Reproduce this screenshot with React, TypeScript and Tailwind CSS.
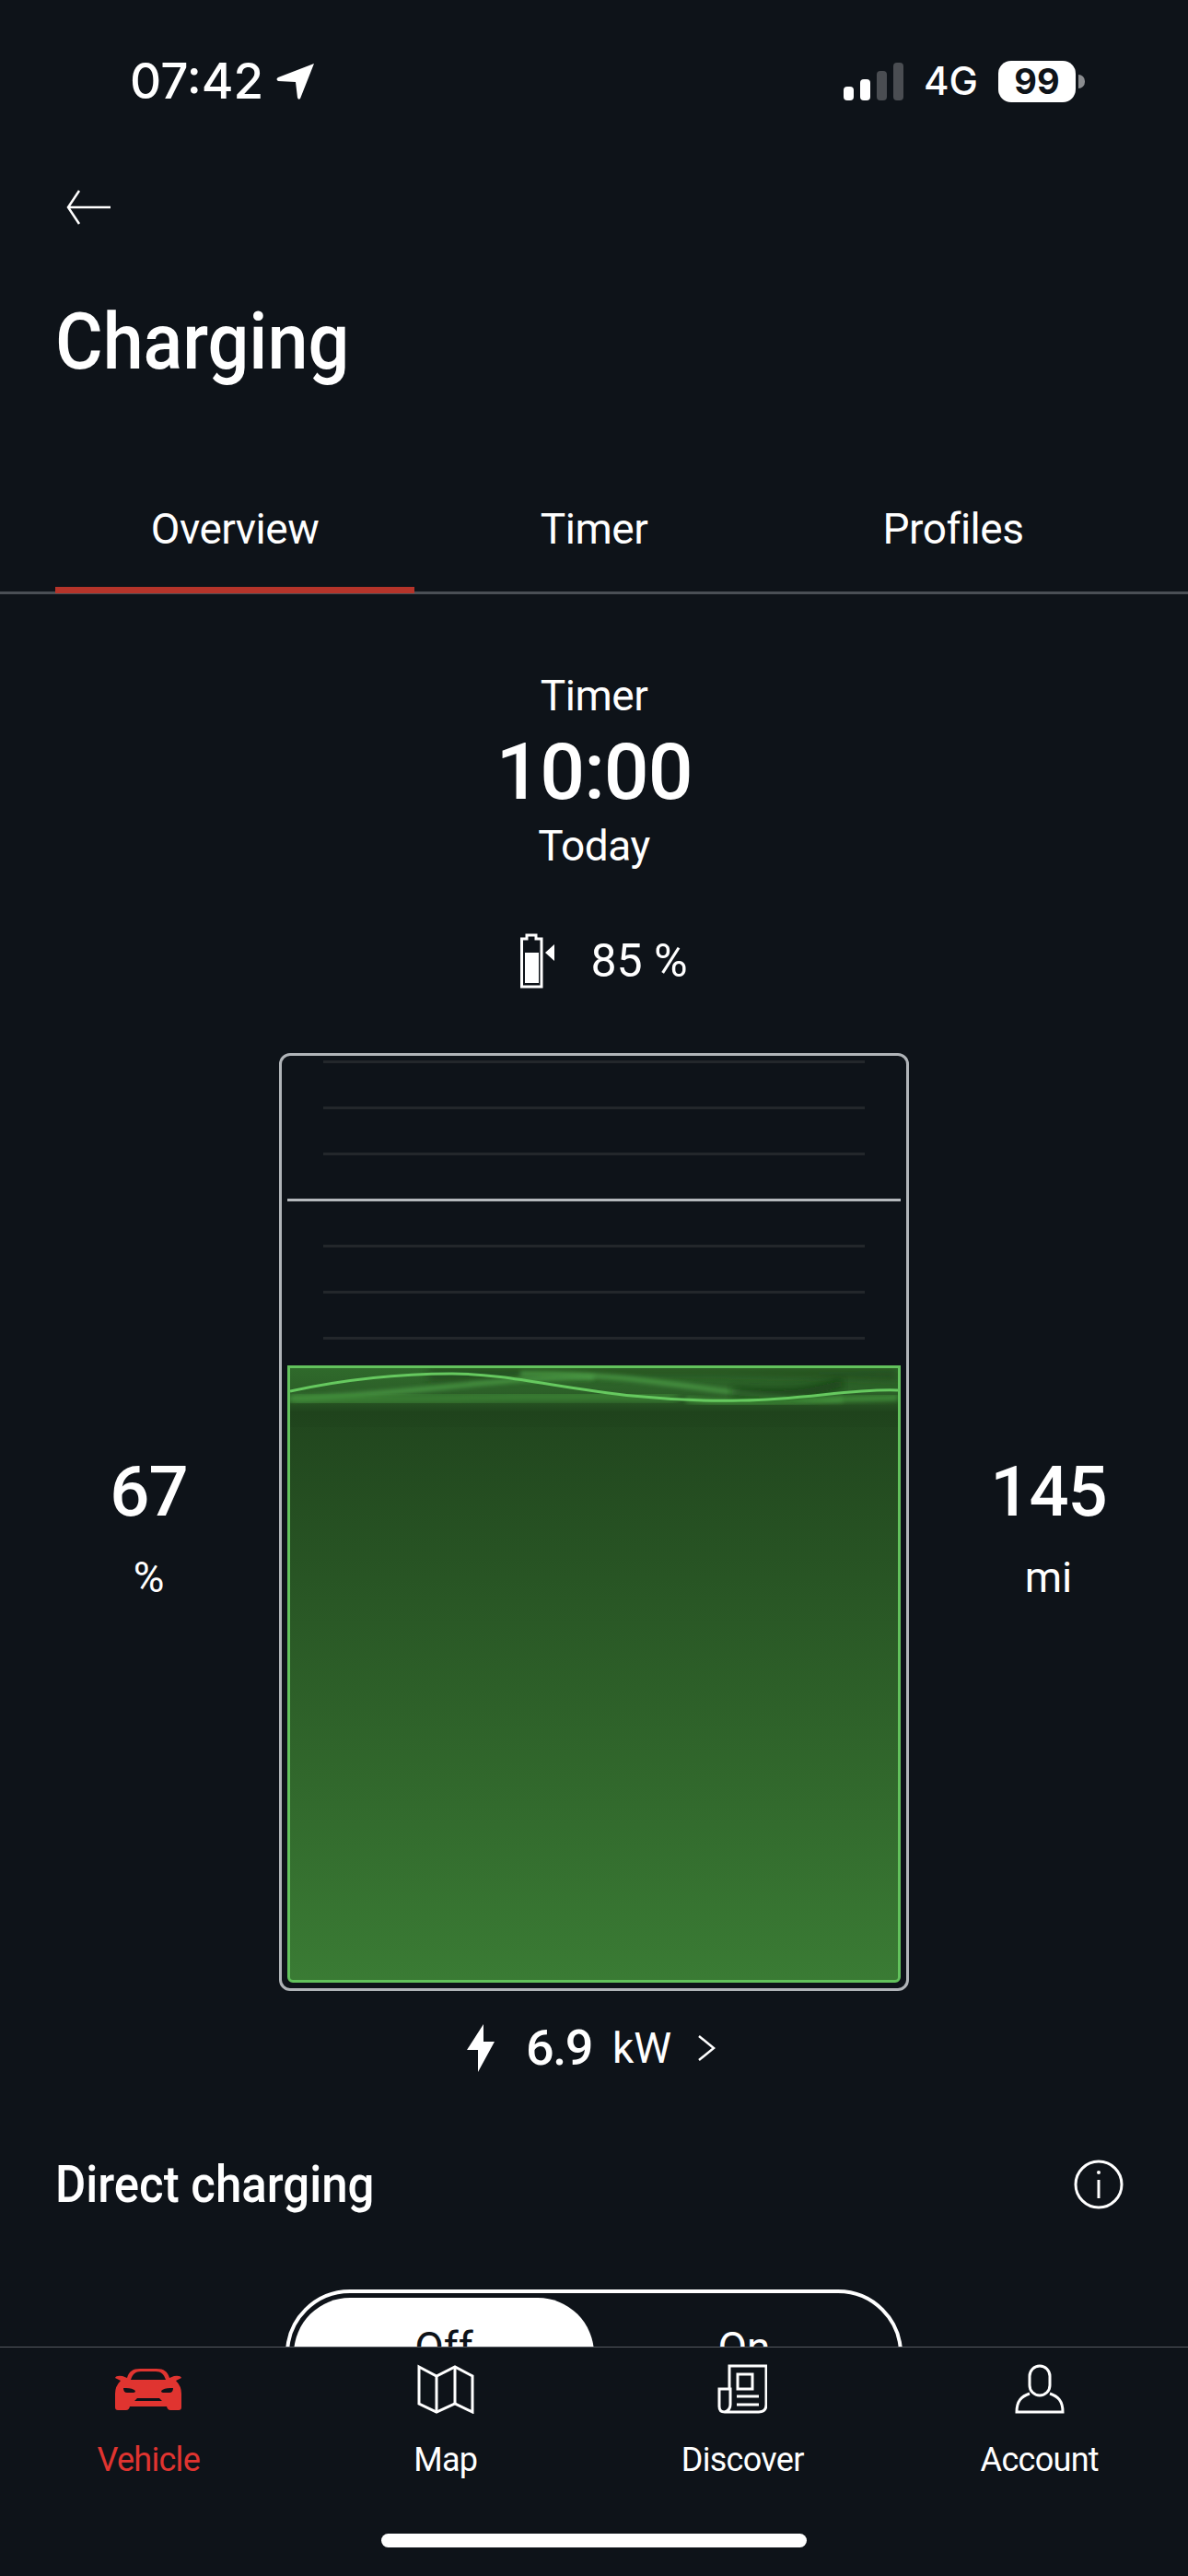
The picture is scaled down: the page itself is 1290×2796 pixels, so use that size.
import type { ReactNode } from "react";

const lineTops = ["a", "b", "c"];
const lineBottoms = ["d", "e", "f", "g"];

function LocationIcon() {
	return (
		<svg width="42" height="40" viewBox="0 0 42 40" className="ml-[14px]">
			<path d="M41 1 L26 39 Q24 41 23 38 L21 21 L2 20 Q-1 18 2 16 Z" fill="#fff" />
		</svg>
	);
}

function StatusBar() {
	return (
		<div className="flex h-[176px] items-center justify-between pl-[141px] pr-[112px] text-white">
			<div className="flex items-center font-['Inter',sans-serif] text-[53px] font-medium leading-none">
				<span>07:42</span>
				<LocationIcon />
			</div>
			<div className="flex items-center font-['Inter',sans-serif]">
				<div className="flex items-end gap-[7px]">
					<span className="h-[15px] w-[11px] rounded-[4px] bg-white" />
					<span className="h-[23px] w-[11px] rounded-[4px] bg-white" />
					<span className="h-[32px] w-[11px] rounded-[4px] bg-[#4a4d52]" />
					<span className="h-[41px] w-[11px] rounded-[4px] bg-[#4a4d52]" />
				</div>
				<span className="ml-[22px] text-[42px] font-medium leading-none">4G</span>
				<span className="ml-[22px] flex h-[45px] w-[84px] items-center justify-center rounded-[14px] bg-white text-[38px] font-bold leading-none text-[#0e1319]">
					99
				</span>
				<span className="ml-[3px] h-[15px] w-[7px] rounded-r-full bg-[#8b8d90]" />
			</div>
		</div>
	);
}

function Tabs() {
	return (
		<div className="mt-[118px] grid grid-cols-3 border-b-[3px] border-[#4a4f55] px-[60px] text-center text-[46px] leading-[60px] tracking-[-0.5px] text-white">
			<div className="-mb-[2px] border-b-[7px] border-[#b5342a] pb-[33px]">Overview</div>
			<div className="pb-[33px]">Timer</div>
			<div className="pb-[33px]">Profiles</div>
		</div>
	);
}

function BatteryTarget() {
	return (
		<svg width="38" height="60" viewBox="0 0 38 60">
			<path d="M7 2 H17 V6 H23 V58 H1.500 V6 H7 Z" fill="none" stroke="#fff" strokeWidth="3" />
			<rect x="5" y="21" width="15" height="33" fill="#fff" />
			<path d="M37 12 V30 L27 21 Z" fill="#fff" />
		</svg>
	);
}

function GaugeWave() {
	return (
		<svg viewBox="0 0 660 64" preserveAspectRatio="none" className="block h-[64px] w-full">
			<defs>
				<linearGradient id="waveBg" x1="0" y1="0" x2="0" y2="1">
					<stop offset="0" stopColor="#2f6a2b" />
					<stop offset="0.42" stopColor="#2c5f28" />
					<stop offset="0.75" stopColor="#1f431c" />
					<stop offset="1" stopColor="#20451d" />
				</linearGradient>
				<filter id="soft" x="-5%" y="-60%" width="110%" height="220%">
					<feGaussianBlur stdDeviation="2.500" />
				</filter>
				<filter id="softer" x="-5%" y="-80%" width="110%" height="260%">
					<feGaussianBlur stdDeviation="5" />
				</filter>
			</defs>
			<rect width="660" height="64" fill="url(#waveBg)" />
			<path d="M150 14 C300 10 380 2 660 14 V0 H150 Z" fill="#1a3a18" opacity="0.55" filter="url(#softer)" />
			<path d="M0 33 C120 30 240 8 330 10" fill="none" stroke="#4fa348" strokeWidth="4" filter="url(#soft)" />
			<path d="M0 34 C150 36 300 28 420 32" fill="none" stroke="#3f8c39" strokeWidth="8" filter="url(#softer)" />
			<path d="M250 6 C400 4 480 36 600 34" fill="none" stroke="#4fa348" strokeWidth="4" filter="url(#soft)" />
			<path d="M430 34 C480 40 560 34 660 32" fill="none" stroke="#3f8c39" strokeWidth="6" filter="url(#soft)" />
			<path d="M480 26 C540 30 560 28 600 16" fill="none" stroke="#0f2a0e" strokeWidth="8" filter="url(#softer)" opacity="0.7" />
			<path
				d="M0 25 C60 12 120 6 176 6 C260 6 340 38 490 35 C560 34 610 22 660 24"
				fill="none"
				stroke="#66c95f"
				strokeWidth="3"
			/>
		</svg>
	);
}

function Gauge() {
	return (
		<div className="flex h-[1018px] w-[684px] shrink-0 flex-col rounded-[12px] border-[3px] border-[#b0b4b8] px-[6px] pb-[6px]">
			<div className="flex h-[336px] shrink-0 flex-col items-center gap-[47px] pt-[5px]">
				{lineTops.map((k) => (
					<span key={k} className="h-[3px] w-[588px] shrink-0 bg-[#23272b]" />
				))}
				<span className="h-[3px] w-full shrink-0 bg-[#b4b8bc]" />
				{lineBottoms.map((k) => (
					<span key={k} className="h-[3px] w-[588px] shrink-0 bg-[#23272b]" />
				))}
			</div>
			<div className="flex-1 overflow-hidden rounded-b-[6px] border-[3px] border-[#62c25c] bg-gradient-to-b from-[#1f421c] to-[#3a7b34]">
				<GaugeWave />
			</div>
		</div>
	);
}

function SideValue({ value, unit, className }: { value: string; unit: string; className?: string }) {
	return (
		<div className={`flex w-[303px] shrink-0 flex-col items-center text-white ${className ?? ""}`}>
			<span className="mt-[12px] text-[76px] font-medium leading-[90px] tracking-[-1px]">{value}</span>
			<span className="mt-[18px] text-[46px] leading-[60px]">{unit}</span>
		</div>
	);
}

function NavItem({ icon, label, active }: { icon: ReactNode; label: string; active?: boolean }) {
	return (
		<div className={active ? "flex flex-col items-center text-[#e03430]" : "flex flex-col items-center text-white"}>
			<div className="flex h-[54px] items-center">{icon}</div>
			<span className="mt-[27px] text-[36px] leading-[46px] tracking-[-0.7px]">{label}</span>
		</div>
	);
}

function CarIcon() {
	return (
		<svg width="72" height="46" viewBox="0 0 72 46" fill="currentColor">
			<path
				fillRule="evenodd"
				d="M13 11 C15 4 19 1 27 1 H45 C53 1 57 4 59 11 L64 9 Q71 8 72 11 L66 14 Q72 20 72 28 V43 Q72 46 69 46 H60 Q57 46 56 42 H16 Q15 46 12 46 H3 Q0 46 0 43 V28 Q0 20 6 14 L0 11 Q1 8 8 9 Z M17 13 H55 C53 7 50 4 44 4 H28 C22 4 19 7 17 13 Z M9 22 Q9 27 13 27 H20 Q22 27 22 25 Q19 22 12 22 Z M63 22 Q63 27 59 27 H52 Q50 27 50 25 Q53 22 60 22 Z M21 36 H51 L48 33 H24 Z"
			/>
		</svg>
	);
}

function MapIcon() {
	return (
		<svg width="62" height="54" viewBox="0 0 62 54" fill="none" stroke="currentColor" strokeWidth="3">
			<path d="M2 3 L21 13 L41 3 L60 13 V52 L41 43 L21 52 L2 43 Z" />
			<path d="M21 13 V52 M41 3 V43" />
		</svg>
	);
}

function DiscoverIcon() {
	return (
		<svg width="54" height="54" viewBox="0 0 54 54" fill="none" stroke="currentColor" strokeWidth="3">
			<path d="M13 27 V2 H53 V44 Q53 52 45 52 H8 Q14 50 14 44 V27 H2 V46 Q2 52 8 52" />
			<rect x="22" y="11" width="16" height="16" />
			<path d="M21 35 H45 M21 44 H45" />
		</svg>
	);
}

function AccountIcon() {
	return (
		<svg width="54" height="54" viewBox="0 0 54 54" fill="none" stroke="currentColor" strokeWidth="3">
			<rect x="16" y="2" width="22" height="32" rx="11" />
			<path d="M16 32 C7 35 2 40 2 52 H52 C52 40 47 35 38 32" />
		</svg>
	);
}

export default function App() {
	return (
		<div className="flex h-[2796px] w-[1290px] flex-col overflow-hidden bg-[#0e1319] font-['Roboto',sans-serif] text-white">
			<main className="h-[2547px] shrink-0 overflow-hidden">
				<StatusBar />
				<div className="ml-[72px] mt-[30px]">
					<svg width="48" height="38" viewBox="0 0 48 38" fill="none" stroke="#fff" strokeWidth="2.500">
						<path d="M48 19 H2 M14 1 L2 19 L14 37" />
					</svg>
				</div>
				<h1 className="ml-[60px] mt-[72px] origin-left scale-x-[0.92] text-[86px] font-medium leading-[110px]">
					Charging
				</h1>
				<Tabs />

				<div className="mt-[80px] flex flex-col items-center">
					<span className="text-[46px] leading-[60px] tracking-[-0.5px]">Timer</span>
					<span className="mt-[3px] text-[86px] font-medium leading-[100px] tracking-[-1px]">10:00</span>
					<span className="text-[46px] leading-[60px] tracking-[-0.5px]">Today</span>
					<div className="ml-[22px] mt-[65px] flex items-center gap-[38px]">
						<BatteryTarget />
						<span className="text-[50px] leading-[60px]">85 %</span>
					</div>
				</div>

				<div className="mt-[70px] flex items-center">
					<SideValue value="67" unit="%" className="pl-[20px]" />
					<Gauge />
					<SideValue value="145" unit="mi" />
				</div>

				<div className="mt-[32px] flex items-center justify-center pr-[6px]">
					<svg width="30" height="52" viewBox="0 0 30 52" fill="#fff">
						<path d="M18 0 V19 H30 L12 52 V28 H0 Z" />
					</svg>
					<span className="ml-[34px] text-[54px] font-medium leading-[60px] tracking-[-1.5px]">6.9</span>
					<span className="ml-[22px] text-[46px] leading-[60px]">kW</span>
					<svg width="20" height="28" viewBox="0 0 20 28" fill="none" stroke="#fff" strokeWidth="2.500" className="ml-[28px]">
						<path d="M2 1 L18 14 L2 27" />
					</svg>
				</div>

				<div className="mx-[60px] mt-[86px] flex items-center justify-between pr-[10px]">
					<h2 className="origin-left scale-x-[0.91] text-[56px] font-medium leading-[64px]">Direct charging</h2>
					<svg width="54" height="54" viewBox="0 0 54 54" fill="none" stroke="#fff" strokeWidth="3">
						<circle cx="27" cy="27" r="25" />
						<path d="M27 22 V42" />
						<circle cx="27" cy="14" r="2" fill="#fff" stroke="none" />
					</svg>
				</div>

				<div className="mx-auto mt-[82px] flex h-[140px] w-[670px] rounded-[70px] border-[4px] border-white p-[5px]">
					<div className="flex h-full w-[326px] justify-center rounded-[64px] bg-white pt-[24px] text-[46px] leading-[60px] text-[#0e1319]">
						Off
					</div>
					<div className="flex flex-1 justify-center pt-[24px] text-[46px] leading-[60px]">On</div>
				</div>
			</main>

			<footer className="flex flex-1 flex-col border-t border-[#55595e]">
				<nav className="grid grid-cols-4 pt-[18px]">
					<NavItem icon={<CarIcon />} label="Vehicle" active />
					<NavItem icon={<MapIcon />} label="Map" />
					<NavItem icon={<DiscoverIcon />} label="Discover" />
					<NavItem icon={<AccountIcon />} label="Account" />
				</nav>
				<div className="mx-auto mt-[57px] h-[15px] w-[462px] rounded-full bg-white" />
			</footer>
		</div>
	);
}
